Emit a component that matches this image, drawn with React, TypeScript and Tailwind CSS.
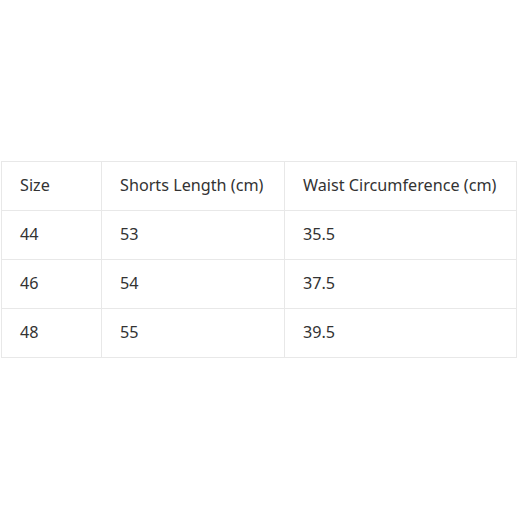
const rows = [
  ["44", "53", "35.5"],
  ["46", "54", "37.5"],
  ["48", "55", "39.5"],
];

export default function App() {
  return (
    <div className="w-[518px] h-[518px] bg-white flex items-center">
      <table
        className="ml-px w-[516px] border-collapse text-[16.2px] text-[#333] table-fixed"
        style={{ fontFamily: '"Noto Sans", "Open Sans", sans-serif' }}
      >
        <colgroup>
          <col className="w-[100px]" />
          <col className="w-[183px]" />
          <col />
        </colgroup>
        <thead>
          <tr className="h-[49px]">
            <th className="border border-[#e8e8e8] pl-[18px] text-left font-normal">Size</th>
            <th className="border border-[#e8e8e8] pl-[18px] text-left font-normal">Shorts Length (cm)</th>
            <th className="border border-[#e8e8e8] pl-[18px] text-left font-normal">Waist Circumference (cm)</th>
          </tr>
        </thead>
        <tbody>
          {rows.map((r) => (
            <tr key={r[0]} className="h-[49px]">
              {r.map((c, i) => (
                <td key={i} className="border border-[#e8e8e8] pl-[18px]">
                  {c}
                </td>
              ))}
            </tr>
          ))}
        </tbody>
      </table>
    </div>
  );
}
